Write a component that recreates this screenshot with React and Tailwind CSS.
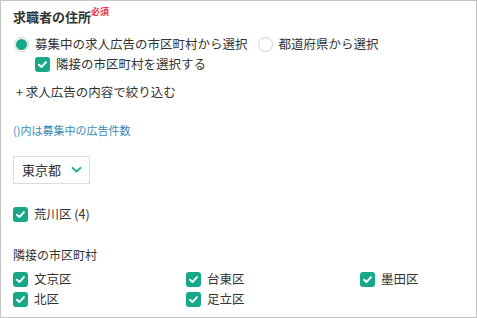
import React from 'react';

const font = { fontFamily: '"Noto Sans CJK JP", "Noto Sans", sans-serif' };

function Check({ label }) {
  return (
    <label className="flex items-center gap-[6px] h-[20px] text-[12.5px] text-[#333]">
      <span className="w-[15px] h-[15px] rounded-[3px] bg-[#16a889] flex items-center justify-center shrink-0">
        <svg width="11" height="11" viewBox="0 0 12 12" fill="none">
          <path d="M2.2 6.3 L4.8 8.8 L9.8 3.4" stroke="#fff" strokeWidth="2.1" strokeLinecap="round" strokeLinejoin="round" />
        </svg>
      </span>
      <span>{label}</span>
    </label>
  );
}

function Radio({ checked, label }) {
  return (
    <label className="flex items-center gap-[6px] h-[20px] text-[12.5px] text-[#333]">
      <span className="w-[15px] h-[15px] rounded-full border border-[#cfcfcf] bg-white flex items-center justify-center shrink-0">
        {checked && <span className="w-[11px] h-[11px] rounded-full bg-[#16a889]" />}
      </span>
      <span>{label}</span>
    </label>
  );
}

export default function App() {
  return (
    <div style={font} className="w-[477px] h-[318px] border border-[#c4c4c4] bg-white px-[12px] overflow-hidden">
      {/* 見出し */}
      <div className="mt-[6px] h-[20px] flex items-center text-[13px] font-bold text-[#333]">
        求職者の住所
        <span className="self-start text-[9px] leading-[10px] font-bold text-[#e8383d] mt-[0px]">必須</span>
      </div>

      <div className="mt-[7px] flex items-center gap-[10px] pl-[1px]">
        <Radio checked label="募集中の求人広告の市区町村から選択" />
        <Radio label="都道府県から選択" />
      </div>
      <div className="pl-[22px]">
        <Check label="隣接の市区町村を選択する" />
      </div>

      <div className="mt-[8px] pl-[3px] h-[20px] flex items-center text-[12.5px] text-[#333]">
        + 求人広告の内容で絞り込む
      </div>

      <div className="mt-[20px] h-[16px] flex items-center text-[11px] text-[#3a8cb5]">
        ()内は募集中の広告件数
      </div>

      <button className="mt-[18px] w-[77px] h-[28px] border border-[#dcdcdc] bg-white flex items-center pl-[8px] gap-[10px] text-[13px] text-[#333]">
        <span>東京都</span>
        <svg width="11" height="8" viewBox="0 0 11 8" fill="none">
          <path d="M1.5 1.8 L5.5 5.6 L9.5 1.8" stroke="#16a889" strokeWidth="1.8" strokeLinecap="round" strokeLinejoin="round" />
        </svg>
      </button>

      <div className="mt-[20px]">
        <Check label="荒川区 (4)" />
      </div>

      <div className="mt-[21px] h-[20px] flex items-center text-[12px] text-[#333]">
        隣接の市区町村
      </div>

      <div className="mt-[4px] grid grid-cols-[173px_174px_1fr]">
        <Check label="文京区" />
        <Check label="台東区" />
        <Check label="墨田区" />
        <Check label="北区" />
        <Check label="足立区" />
      </div>
    </div>
  );
}
